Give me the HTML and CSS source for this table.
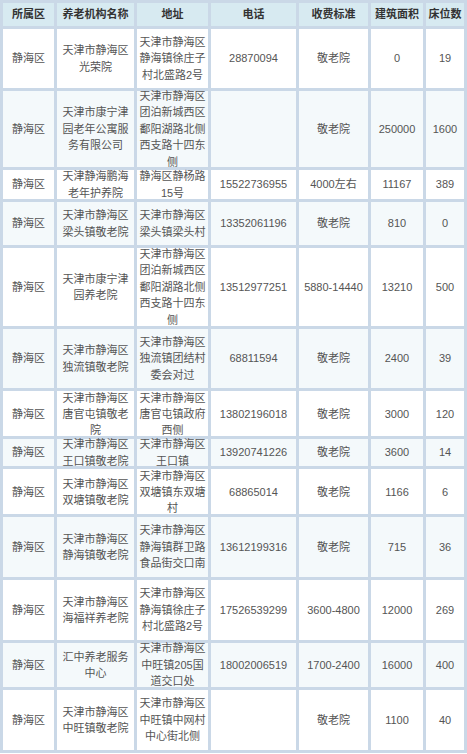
FILE: index.html
```html
<!DOCTYPE html>
<html lang="zh-CN">
<head>
<meta charset="utf-8">
<title>静海区养老机构</title>
<link rel="stylesheet" href="styles.css">
</head>
<body>
<table class="grid">
  <colgroup>
    <col class="w1"><col class="w2"><col class="w3"><col class="w4"><col class="w5"><col class="w6"><col class="w7">
  </colgroup>
  <thead>
    <tr class="hd">
      <th><div class="c h23">所属区</div></th>
      <th><div class="c h23">养老机构名称</div></th>
      <th><div class="c h23">地址</div></th>
      <th><div class="c h23">电话</div></th>
      <th><div class="c h23">收费标准</div></th>
      <th><div class="c h23">建筑面积</div></th>
      <th><div class="c h23">床位数</div></th>
    </tr>
  </thead>
  <tbody>
    <tr>
      <td><div class="c h59">静海区</div></td>
      <td><div class="c h59">天津市静海区<br>光荣院</div></td>
      <td><div class="c h59">天津市静海区<br>静海镇徐庄子<br>村北盛路2号</div></td>
      <td><div class="c h59">28870094</div></td>
      <td><div class="c h59">敬老院</div></td>
      <td><div class="c h59">0</div></td>
      <td><div class="c h59">19</div></td>
    </tr>
    <tr class="alt">
      <td><div class="c h76">静海区</div></td>
      <td><div class="c h76">天津市康宁津<br>园老年公寓服<br>务有限公司</div></td>
      <td><div class="c h76">天津市静海区<br>团泊新城西区<br>鄱阳湖路北侧<br>西支路十四东<br>侧</div></td>
      <td><div class="c h76"></div></td>
      <td><div class="c h76">敬老院</div></td>
      <td><div class="c h76">250000</div></td>
      <td><div class="c h76">1600</div></td>
    </tr>
    <tr>
      <td><div class="c h29">静海区</div></td>
      <td><div class="c h29">天津静海鹏海<br>老年护养院</div></td>
      <td><div class="c h29">静海区静杨路<br>15号</div></td>
      <td><div class="c h29">15522736955</div></td>
      <td><div class="c h29">4000左右</div></td>
      <td><div class="c h29">11167</div></td>
      <td><div class="c h29">389</div></td>
    </tr>
    <tr class="alt">
      <td><div class="c h43">静海区</div></td>
      <td><div class="c h43">天津市静海区<br>梁头镇敬老院</div></td>
      <td><div class="c h43">天津市静海区<br>梁头镇梁头村</div></td>
      <td><div class="c h43">13352061196</div></td>
      <td><div class="c h43">敬老院</div></td>
      <td><div class="c h43">810</div></td>
      <td><div class="c h43">0</div></td>
    </tr>
    <tr>
      <td><div class="c h78">静海区</div></td>
      <td><div class="c h78">天津市康宁津<br>园养老院</div></td>
      <td><div class="c h78">天津市静海区<br>团泊新城西区<br>鄱阳湖路北侧<br>西支路十四东<br>侧</div></td>
      <td><div class="c h78">13512977251</div></td>
      <td><div class="c h78">5880-14440</div></td>
      <td><div class="c h78">13210</div></td>
      <td><div class="c h78">500</div></td>
    </tr>
    <tr class="alt">
      <td><div class="c h59">静海区</div></td>
      <td><div class="c h59">天津市静海区<br>独流镇敬老院</div></td>
      <td><div class="c h59">天津市静海区<br>独流镇团结村<br>委会对过</div></td>
      <td><div class="c h59">68811594</div></td>
      <td><div class="c h59">敬老院</div></td>
      <td><div class="c h59">2400</div></td>
      <td><div class="c h59">39</div></td>
    </tr>
    <tr>
      <td><div class="c h45">静海区</div></td>
      <td><div class="c h45">天津市静海区<br>唐官屯镇敬老<br>院</div></td>
      <td><div class="c h45">天津市静海区<br>唐官屯镇政府<br>西侧</div></td>
      <td><div class="c h45">13802196018</div></td>
      <td><div class="c h45">敬老院</div></td>
      <td><div class="c h45">3000</div></td>
      <td><div class="c h45">120</div></td>
    </tr>
    <tr class="alt">
      <td><div class="c h27">静海区</div></td>
      <td><div class="c h27">天津市静海区<br>王口镇敬老院</div></td>
      <td><div class="c h27">天津市静海区<br>王口镇</div></td>
      <td><div class="c h27">13920741226</div></td>
      <td><div class="c h27">敬老院</div></td>
      <td><div class="c h27">3600</div></td>
      <td><div class="c h27">14</div></td>
    </tr>
    <tr>
      <td><div class="c h45">静海区</div></td>
      <td><div class="c h45">天津市静海区<br>双塘镇敬老院</div></td>
      <td><div class="c h45">天津市静海区<br>双塘镇东双塘<br>村</div></td>
      <td><div class="c h45">68865014</div></td>
      <td><div class="c h45">敬老院</div></td>
      <td><div class="c h45">1166</div></td>
      <td><div class="c h45">6</div></td>
    </tr>
    <tr class="alt">
      <td><div class="c h60">静海区</div></td>
      <td><div class="c h60">天津市静海区<br>静海镇敬老院</div></td>
      <td><div class="c h60">天津市静海区<br>静海镇群卫路<br>食品街交口南</div></td>
      <td><div class="c h60">13612199316</div></td>
      <td><div class="c h60">敬老院</div></td>
      <td><div class="c h60">715</div></td>
      <td><div class="c h60">36</div></td>
    </tr>
    <tr>
      <td><div class="c h60">静海区</div></td>
      <td><div class="c h60">天津市静海区<br>海福祥养老院</div></td>
      <td><div class="c h60">天津市静海区<br>静海镇徐庄子<br>村北盛路2号</div></td>
      <td><div class="c h60">17526539299</div></td>
      <td><div class="c h60">3600-4800</div></td>
      <td><div class="c h60">12000</div></td>
      <td><div class="c h60">269</div></td>
    </tr>
    <tr class="alt">
      <td><div class="c h44">静海区</div></td>
      <td><div class="c h44">汇中养老服务<br>中心</div></td>
      <td><div class="c h44">天津市静海区<br>中旺镇205国<br>道交口处</div></td>
      <td><div class="c h44">18002006519</div></td>
      <td><div class="c h44">1700-2400</div></td>
      <td><div class="c h44">16000</div></td>
      <td><div class="c h44">400</div></td>
    </tr>
    <tr>
      <td><div class="c h60">静海区</div></td>
      <td><div class="c h60">天津市静海区<br>中旺镇敬老院</div></td>
      <td><div class="c h60">天津市静海区<br>中旺镇中网村<br>中心街北侧</div></td>
      <td><div class="c h60"></div></td>
      <td><div class="c h60">敬老院</div></td>
      <td><div class="c h60">1100</div></td>
      <td><div class="c h60">40</div></td>
    </tr>
  </tbody>
</table>
</body>
</html>
```
FILE: styles.css
```css
html, body {
  margin: 0;
  padding: 0;
  background: #ffffff;
}
.grid {
  width: 467px;
  table-layout: fixed;
  border-collapse: separate;
  border-spacing: 3px;
  background: #cad8e7;
  font-family: "Liberation Sans", "Noto Sans CJK SC", sans-serif;
  font-size: 11px;
  color: #555555;
}
.w1 { width: 51px; }
.w2 { width: 77px; }
.w3 { width: 71px; }
.w4 { width: 85px; }
.w5 { width: 69px; }
.w6 { width: 52px; }
.w7 { width: 38px; }
.grid th, .grid td {
  padding: 0;
  background: #ffffff;
  vertical-align: middle;
  text-align: center;
}
.grid .alt td {
  background: #f4f9fb;
}
.grid .hd th {
  background: #d7eaf1;
  color: #333333;
  font-weight: bold;
}
.c {
  display: flex;
  flex-direction: column;
  justify-content: center;
  align-items: center;
  line-height: 16.5px;
  white-space: nowrap;
  overflow: visible;
}
.h23 { height: 23px; }
.h27 { height: 27px; line-height: 17px; }
.h29 { height: 29px; }
.h43 { height: 43px; }
.h44 { height: 44px; }
.h45 { height: 45px; line-height: 16px; }
.h59 { height: 59px; }
.h60 { height: 60px; }
.h76 { height: 76px; }
.h78 { height: 78px; }
```
